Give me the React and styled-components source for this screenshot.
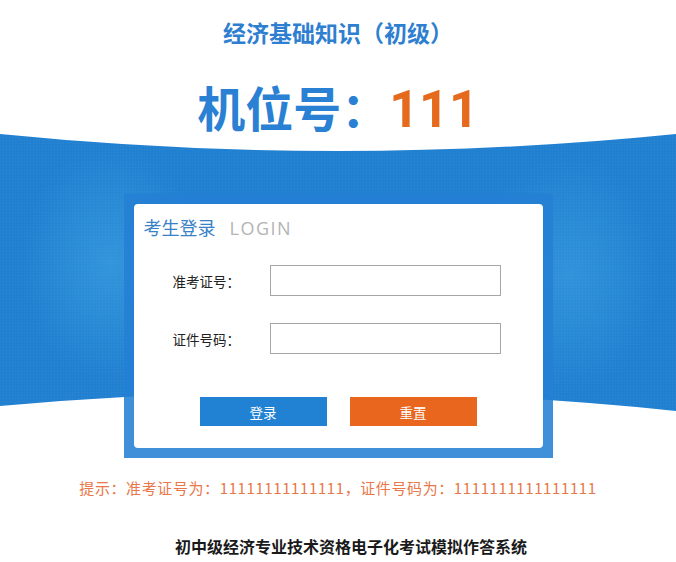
import styled, { createGlobalStyle } from "styled-components";

const Global = createGlobalStyle`
  body {
    margin: 0;
    background: #fff;
    font-family: "Noto Sans CJK SC", "Noto Sans", sans-serif;
  }
`;

const Page = styled.div`
  width: 676px;
  height: 562px;
  overflow: hidden;
  padding-top: 17px;
  box-sizing: border-box;
`;

const Subject = styled.h2`
  margin: 0;
  text-align: center;
  font-size: 23px;
  line-height: 30px;
  font-weight: 700;
  color: #2f7fd0;
`;

const Seat = styled.h1`
  margin: 35px 0 0;
  text-align: center;
  font-size: 48px;
  line-height: 48px;
  font-weight: 700;
  color: #2a80d3;
  span {
    font-family: Roboto, "Liberation Sans", sans-serif;
    font-size: 52px;
    color: #e56a1e;
  }
`;

const Stage = styled.section`
  position: relative;
  padding-top: 60px;
  &::before {
    content: "";
    position: absolute;
    top: 0;
    left: 0;
    width: 676px;
    height: 277px;
    background:
      radial-gradient(ellipse 90px 120px at 110px 130px, rgba(70, 170, 230, 0.5), transparent),
      radial-gradient(ellipse 90px 120px at 570px 140px, rgba(70, 170, 230, 0.45), transparent),
      repeating-linear-gradient(0deg, rgba(255, 255, 255, 0.025) 0 1px, transparent 1px 3px),
      repeating-linear-gradient(90deg, rgba(255, 255, 255, 0.025) 0 1px, transparent 1px 3px),
      #1f7fd0;
    clip-path: path("M0 0 Q338 34 676 0 L676 277 Q338 242 0 272 Z");
  }
`;

const Frame = styled.div`
  position: relative;
  width: 409px;
  margin: 0 auto;
  padding: 10px;
  background: rgba(36, 128, 212, 0.88);
`;

const Card = styled.div`
  background: #fff;
  border-radius: 4px;
  padding: 10px 0 22px;
`;

const CardTitle = styled.div`
  padding-left: 10px;
  height: 26px;
  line-height: 26px;
  font-size: 18px;
  color: #3a82c8;
  span {
    margin-left: 14px;
    font-family: "Open Sans", sans-serif;
    color: #b4b4b4;
    letter-spacing: 1.5px;
  }
`;

const Form = styled.div`
  margin-top: 25px;
  display: flex;
  flex-direction: column;
  gap: 27px;
`;

const Row = styled.label`
  display: flex;
  align-items: center;
  padding-left: 39px;
`;

const Label = styled.span`
  width: 97px;
  font-size: 13.5px;
  color: #222;
`;

const Input = styled.input`
  width: 231px;
  height: 31px;
  box-sizing: border-box;
  border: 1px solid #a6a6a6;
  outline: none;
  padding: 0 6px;
`;

const Buttons = styled.div`
  margin-top: 43px;
  display: flex;
  justify-content: center;
  gap: 23px;
`;

const Button = styled.button`
  width: 127px;
  height: 29px;
  border: none;
  padding: 0;
  background: ${(p) => (p.$tone === "orange" ? "#e8661d" : "#2182d3")};
  color: #fff;
  font-family: "Noto Sans CJK SC", sans-serif;
  font-size: 13.5px;
  cursor: pointer;
`;

const Hint = styled.p`
  margin: 20px 0 0;
  text-align: center;
  font-size: 15px;
  line-height: 20px;
  color: #e8774a;
  letter-spacing: 0.6px;
`;

const Footer = styled.p`
  margin: 37px 0 0;
  padding-left: 26px;
  text-align: center;
  font-size: 16px;
  line-height: 22px;
  font-weight: 700;
  color: #1a1a1a;
`;

export default function App() {
  return (
    <Page>
      <Global />
      <Subject>经济基础知识（初级）</Subject>
      <Seat>
        机位号：<span>111</span>
      </Seat>
      <Stage>
        <Frame>
          <Card>
            <CardTitle>
              考生登录<span>LOGIN</span>
            </CardTitle>
            <Form>
              <Row>
                <Label>准考证号：</Label>
                <Input type="text" />
              </Row>
              <Row>
                <Label>证件号码：</Label>
                <Input type="password" />
              </Row>
            </Form>
            <Buttons>
              <Button>登录</Button>
              <Button $tone="orange">重置</Button>
            </Buttons>
          </Card>
        </Frame>
      </Stage>
      <Hint>提示：准考证号为：11111111111111，证件号码为：1111111111111111</Hint>
      <Footer>初中级经济专业技术资格电子化考试模拟作答系统</Footer>
    </Page>
  );
}
